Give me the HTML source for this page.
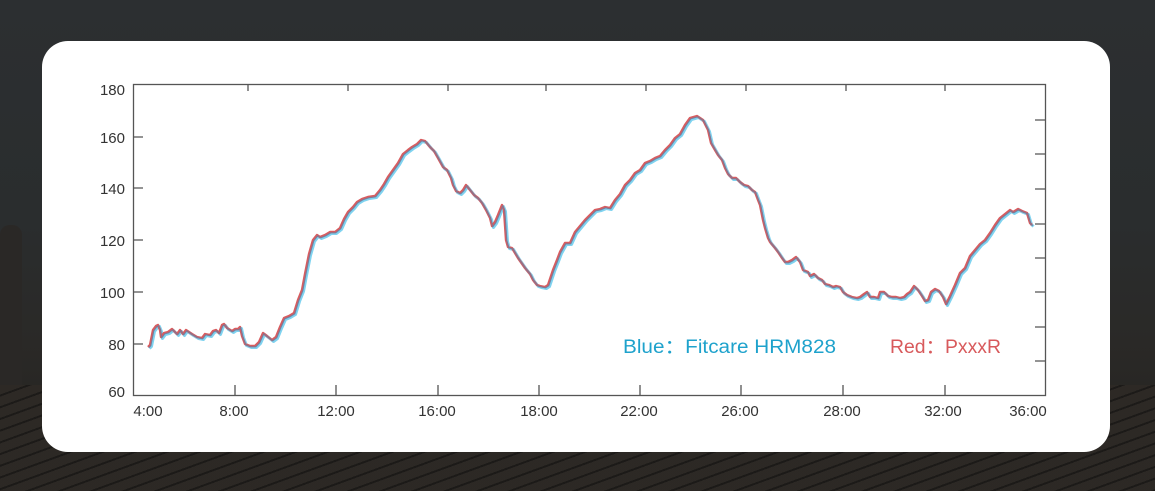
<!DOCTYPE html>
<html><head><meta charset="utf-8"><style>
html,body{margin:0;padding:0;}
body{width:1155px;height:491px;overflow:hidden;position:relative;
background:linear-gradient(180deg,#2c2f31 0%,#2a2d2e 45%,#2a2927 70%,#24211e 100%);}
.card{position:absolute;left:42px;top:41px;width:1068px;height:411px;background:#fff;border-radius:26px;}
svg{position:absolute;left:0;top:0;}
text{font-family:"Liberation Sans","Noto Sans CJK SC",sans-serif;}
</style></head><body>
<div style="position:absolute;left:0;top:225px;width:22px;height:160px;background:#2a2826;border-radius:10px 10px 0 0"></div>
<div style="position:absolute;left:0;top:385px;width:1155px;height:106px;background:repeating-linear-gradient(160deg,#2d2925 0 9px,#1c1a18 9px 11px);opacity:.95"></div>
<div class="card"></div>
<svg width="1155" height="491" viewBox="0 0 1155 491">
<g stroke="#555" stroke-width="1.3" fill="none">
<rect x="133.5" y="84.5" width="912" height="311"/>
<path d="M133 344h10M133 292h10M133 240h10M133 188h10M133 137h10
M1045 120h-10M1045 154h-10M1045 189h-10M1045 224h-10M1045 258h-10M1045 292h-10M1045 327h-10M1045 361h-10
M235 395v-10M336 395v-10M438 395v-10M539 395v-10M640 395v-10M741 395v-10M843 395v-10M945 395v-10
M248 85v6M348 85v6M448 85v6M546 85v6M646 85v6M746 85v6M846 85v6M945 85v6"/>
</g>
<g font-size="15" fill="#333" text-anchor="end">
<text x="125" y="95">180</text><text x="125" y="143">160</text><text x="125" y="194">140</text>
<text x="125" y="246">120</text><text x="125" y="298">100</text><text x="125" y="350">80</text><text x="125" y="397">60</text>
</g>
<g font-size="15" fill="#333" text-anchor="middle">
<text x="148" y="416">4:00</text><text x="234" y="416">8:00</text><text x="336" y="416">12:00</text>
<text x="437" y="416">16:00</text><text x="539" y="416">18:00</text><text x="639" y="416">22:00</text>
<text x="740" y="416">26:00</text><text x="842" y="416">28:00</text><text x="943" y="416">32:00</text><text x="1028" y="416">36:00</text>
</g>
<defs><path id="ln" d="M148 347L150 345L153 330L156 326L158 325L160 330L161 337L164 333L168 332L172 329L175 332L177 334L180 330L183 334L186 330L189 332L192 334L197 337L202 338L205 334L210 335L213 331L216 330L219 333L222 325L224 324L227 328L232 331L235 329L238 329L240 327L242 336L245 344L250 346L255 346L259 342L263 333L267 336L272 340L276 337L280 327L284 318L289 316L294 313L298 300L302 290L305 274L309 254L313 240L317 235L320 237L325 235L330 232L335 232L340 228L344 219L348 212L353 207L357 202L362 199L368 197L375 196L380 190L384 184L388 177L393 170L398 163L403 154L408 150L412 147L417 144L421 140L425 141L430 147L434 151L438 158L443 167L447 170L451 178L453 185L456 191L460 193L463 190L466 185L470 190L474 195L478 198L482 203L486 210L490 218L492 226L495 222L498 215L502 205L504 210L506 240L508 247L512 248L518 258L525 268L530 274L533 280L537 285L540 286L545 287L548 285L553 270L557 260L560 252L565 243L570 243L575 232L580 226L585 220L590 215L595 210L600 209L605 207L610 208L615 200L620 194L625 185L630 180L635 173L640 170L645 163L650 161L655 158L660 156L665 150L670 145L675 138L680 134L685 125L690 118L697 116L700 118L703 120L708 130L711 143L715 150L718 155L722 160L725 168L728 174L732 178L736 178L740 182L744 185L748 186L752 190L755 192L758 200L760 205L763 220L765 228L768 238L770 242L775 248L778 252L782 258L785 262L788 262L792 260L796 257L800 262L803 270L808 272L810 276L814 274L818 278L822 280L825 284L829 285L833 287L836 286L840 287L843 292L847 295L852 297L857 298L860 297L864 294L867 292L870 297L874 297L878 298L880 292L884 292L888 296L892 297L896 297L900 298L904 297L907 294L910 292L914 286L918 290L922 296L925 301L928 300L931 292L935 289L939 291L943 297L946 304L950 296L955 285L960 273L965 268L970 256L975 250L980 244L985 240L990 233L995 225L1000 218L1005 214L1010 210L1013 212L1018 209L1022 211L1027 213L1030 223L1032 225"/></defs>
<use href="#ln" transform="translate(1.5,1.5)" stroke="#7fd3f0" stroke-width="3" fill="none" stroke-linejoin="round"/>
<use href="#ln" stroke="#d85c5f" stroke-width="2.4" fill="none" stroke-linejoin="round"/>
<use href="#ln" transform="translate(0.8,0.8)" stroke="#6a7ea0" stroke-width="1.2" fill="none" stroke-linejoin="round" opacity=".8"/>
<text x="623" y="353" font-size="19" fill="#1ea2cc" textLength="213" lengthAdjust="spacingAndGlyphs">Blue：Fitcare HRM828</text>
<text x="890" y="353" font-size="19" fill="#d85a5c" textLength="111" lengthAdjust="spacingAndGlyphs">Red：PxxxR</text>
</svg>
</body></html>
